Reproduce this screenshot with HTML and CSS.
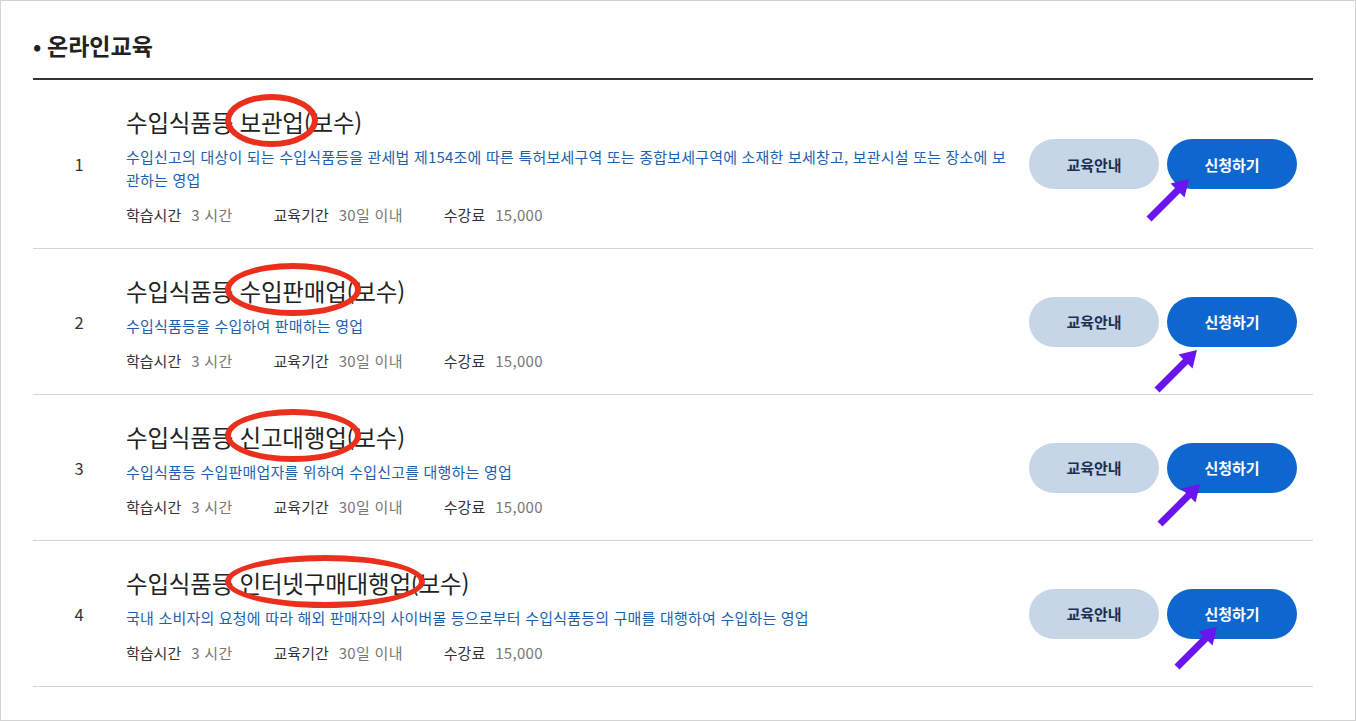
FILE: index.html
```html
<!DOCTYPE html>
<html lang="ko">
<head>
<meta charset="utf-8">
<title>온라인교육</title>
<link rel="stylesheet" href="styles.css">
</head>
<body>
<div class="page">
  <h2 class="section-title"><span class="dot">•</span>온라인교육</h2>
  <ul class="course-list">
    <li class="course">
      <div class="num">1</div>
      <div class="info">
        <p class="title">수입식품등 <span class="mark">보관업</span>(보수)</p>
        <p class="desc">수입신고의 대상이 되는 수입식품등을 관세법 제154조에 따른 특허보세구역 또는 종합보세구역에 소재한 보세창고, 보관시설 또는 장소에 보관하는 영업</p>
        <div class="meta">
          <span class="item"><span class="label">학습시간</span><span class="value">3 시간</span></span>
          <span class="item"><span class="label">교육기간</span><span class="value">30일 이내</span></span>
          <span class="item"><span class="label">수강료</span><span class="value">15,000</span></span>
        </div>
      </div>
      <div class="actions">
        <a class="btn btn-guide" href="#">교육안내</a>
        <a class="btn btn-apply" href="#">신청하기
          <svg class="arrow a1" viewBox="0 0 46 46" aria-hidden="true"><line x1="4" y1="42" x2="33" y2="13"/><polygon points="44,2 39.5,20.5 25.5,6.5"/></svg>
        </a>
      </div>
    </li>
    <li class="course">
      <div class="num">2</div>
      <div class="info">
        <p class="title">수입식품등 <span class="mark">수입판매업</span>(보수)</p>
        <p class="desc">수입식품등을 수입하여 판매하는 영업</p>
        <div class="meta">
          <span class="item"><span class="label">학습시간</span><span class="value">3 시간</span></span>
          <span class="item"><span class="label">교육기간</span><span class="value">30일 이내</span></span>
          <span class="item"><span class="label">수강료</span><span class="value">15,000</span></span>
        </div>
      </div>
      <div class="actions">
        <a class="btn btn-guide" href="#">교육안내</a>
        <a class="btn btn-apply" href="#">신청하기
          <svg class="arrow a2" viewBox="0 0 46 46" aria-hidden="true"><line x1="4" y1="42" x2="33" y2="13"/><polygon points="44,2 39.5,20.5 25.5,6.5"/></svg>
        </a>
      </div>
    </li>
    <li class="course">
      <div class="num">3</div>
      <div class="info">
        <p class="title">수입식품등 <span class="mark">신고대행업</span>(보수)</p>
        <p class="desc">수입식품등 수입판매업자를 위하여 수입신고를 대행하는 영업</p>
        <div class="meta">
          <span class="item"><span class="label">학습시간</span><span class="value">3 시간</span></span>
          <span class="item"><span class="label">교육기간</span><span class="value">30일 이내</span></span>
          <span class="item"><span class="label">수강료</span><span class="value">15,000</span></span>
        </div>
      </div>
      <div class="actions">
        <a class="btn btn-guide" href="#">교육안내</a>
        <a class="btn btn-apply" href="#">신청하기
          <svg class="arrow a3" viewBox="0 0 46 46" aria-hidden="true"><line x1="4" y1="42" x2="33" y2="13"/><polygon points="44,2 39.5,20.5 25.5,6.5"/></svg>
        </a>
      </div>
    </li>
    <li class="course">
      <div class="num">4</div>
      <div class="info">
        <p class="title">수입식품등 <span class="mark">인터넷구매대행업</span>(보수)</p>
        <p class="desc">국내 소비자의 요청에 따라 해외 판매자의 사이버몰 등으로부터 수입식품등의 구매를 대행하여 수입하는 영업</p>
        <div class="meta">
          <span class="item"><span class="label">학습시간</span><span class="value">3 시간</span></span>
          <span class="item"><span class="label">교육기간</span><span class="value">30일 이내</span></span>
          <span class="item"><span class="label">수강료</span><span class="value">15,000</span></span>
        </div>
      </div>
      <div class="actions">
        <a class="btn btn-guide" href="#">교육안내</a>
        <a class="btn btn-apply" href="#">신청하기
          <svg class="arrow a4" viewBox="0 0 46 46" aria-hidden="true"><line x1="4" y1="42" x2="33" y2="13"/><polygon points="44,2 39.5,20.5 25.5,6.5"/></svg>
        </a>
      </div>
    </li>
  </ul>
</div>
</body>
</html>
```
FILE: styles.css
```css
* { box-sizing: border-box; }
html, body { margin: 0; padding: 0; background: #fff; }
body {
  font-family: "Noto Sans CJK KR", "Noto Sans", sans-serif;
  color: #222;
}
.page {
  width: 1356px;
  height: 721px;
  border: 1px solid #d3d3d3;
  padding: 29px 42px 0 32px;
  overflow: hidden;
}
.section-title {
  margin: 0 0 18px;
  font-size: 23px;
  line-height: 30px;
  font-weight: 700;
  color: #222;
  display: flex;
  align-items: center;
}
.section-title .dot {
  font-size: 22px;
  width: 14px;
}
.course-list {
  list-style: none;
  margin: 0;
  padding: 0;
  border-top: 2px solid #333;
}
.course {
  display: flex;
  align-items: center;
  border-bottom: 1px solid #d5d5d5;
}
.num {
  width: 93px;
  flex: none;
  text-align: center;
  font-size: 16.5px;
  color: #333;
  padding-right: 1px;
}
.info {
  flex: 1;
  padding: 26px 20px 23px 0;
}
.info p { margin: 0; }
.title {
  font-size: 23.5px;
  line-height: 32px;
  color: #222;
  font-weight: 400;
  letter-spacing: -0.2px;
}
.mark {
  position: relative;
}
.mark::after {
  content: "";
  position: absolute;
  left: -14px;
  right: -14px;
  top: -11px;
  bottom: -8px;
  border: 6.5px solid #ea2f1c;
  border-radius: 50%;
}
.desc {
  margin-top: 7px !important;
  font-size: 15px;
  line-height: 23px;
  color: #1e5fae;
  letter-spacing: 0.2px;
}
.meta {
  margin-top: 14px;
  display: flex;
  gap: 41px;
  font-size: 15px;
  line-height: 20px;
}
.meta .item { display: flex; gap: 10px; }
.meta .label { color: #333; }
.meta .value { color: #777; letter-spacing: 0.3px; }
.actions {
  flex: none;
  display: flex;
  gap: 8px;
  padding-right: 16px;
}
.btn {
  position: relative;
  display: flex;
  align-items: center;
  justify-content: center;
  width: 130px;
  height: 50px;
  border-radius: 25px;
  font-size: 15px;
  font-weight: 700;
  text-decoration: none;
}
.btn-guide { background: #c6d6e7; color: #1b2e55; }
.btn-apply { background: #0e67cf; color: #fff; }
.arrow {
  position: absolute;
  width: 46px;
  height: 46px;
  overflow: visible;
}
.arrow line { stroke: #6a14ee; stroke-width: 7; }
.arrow polygon { fill: #6a14ee; }
.a1 { left: -22px; top: 38px; }
.a2 { left: -14px; top: 51px; }
.a3 { left: -11px; top: 39px; }
.a4 { left: 6px; top: 36px; }
```
